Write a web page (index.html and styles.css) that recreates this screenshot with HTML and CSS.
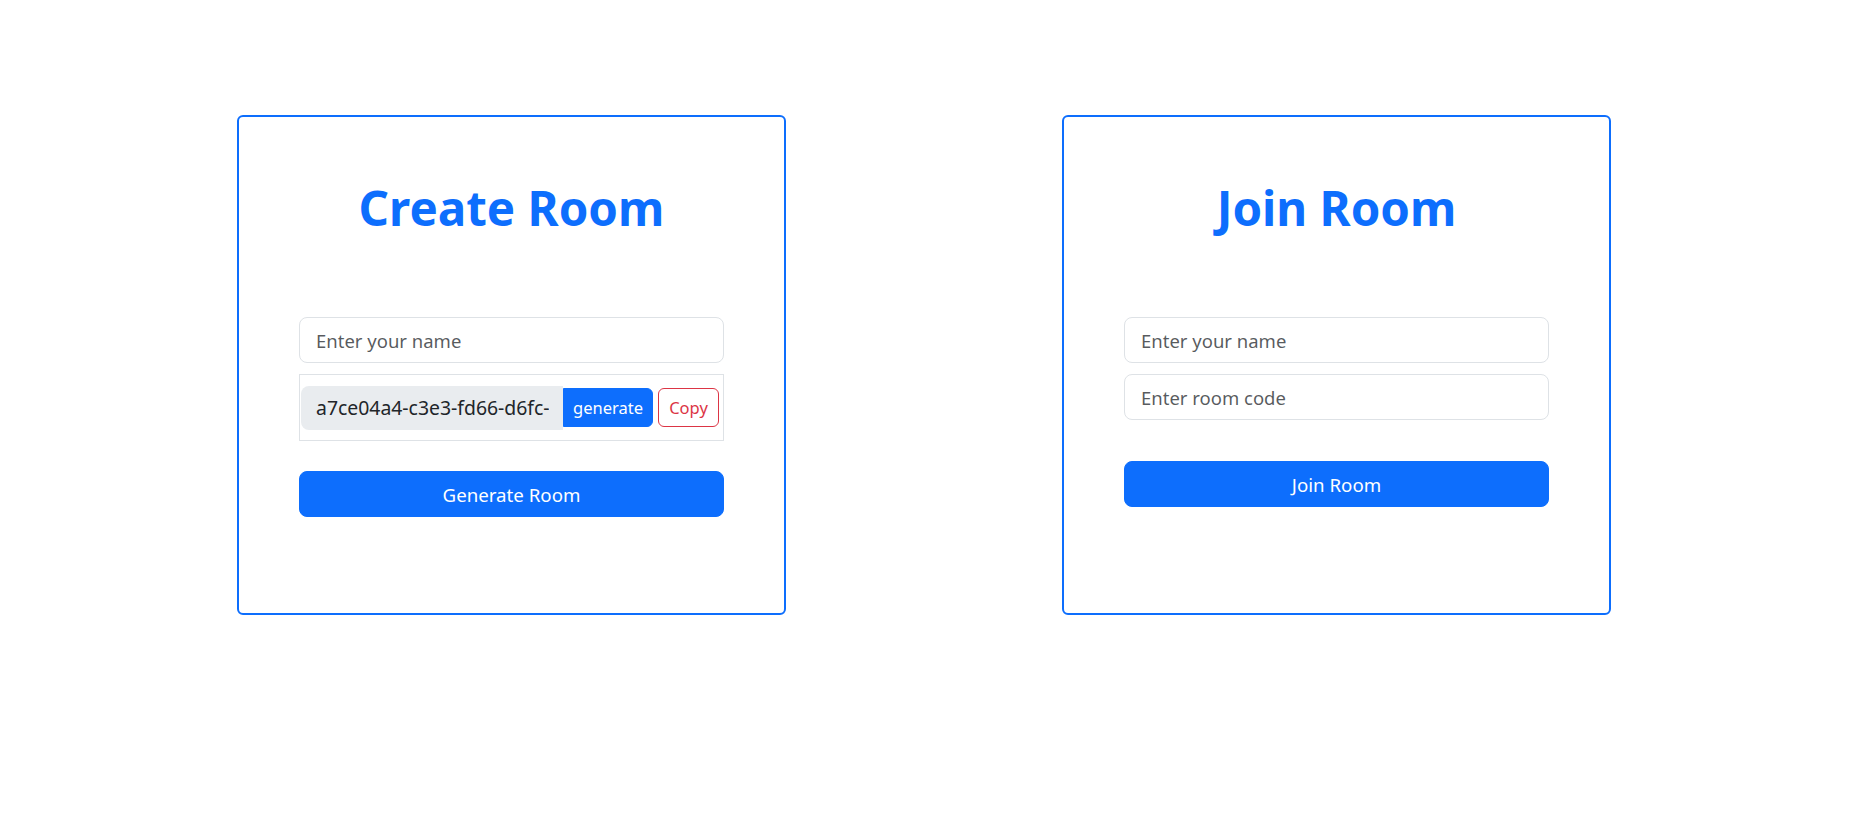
FILE: index.html
```html
<!DOCTYPE html>
<html lang="en">
<head>
<meta charset="utf-8">
<title>Rooms</title>
<link rel="stylesheet" href="styles.css">
</head>
<body>
<main class="page">
  <section class="card">
    <h1 class="card-title">Create Room</h1>
    <input class="field" type="text" placeholder="Enter your name">
    <div class="code-group">
      <input class="code-field" type="text" value="a7ce04a4-c3e3-fd66-d6fc-0a1b2c3d4e5f" readonly>
      <button class="btn-generate" type="button">generate</button>
      <button class="btn-copy" type="button">Copy</button>
    </div>
    <button class="btn-main btn-main-create" type="button">Generate Room</button>
  </section>
  <section class="card">
    <h1 class="card-title">Join Room</h1>
    <input class="field" type="text" placeholder="Enter your name">
    <input class="field field-second" type="text" placeholder="Enter room code">
    <button class="btn-main btn-main-join" type="button">Join Room</button>
  </section>
</main>
</body>
</html>
```
FILE: styles.css
```css
* { box-sizing: border-box; }

html, body {
  margin: 0;
  padding: 0;
  background: #ffffff;
}

body {
  font-family: "Noto Sans", "Open Sans", sans-serif;
  color: #212529;
}

.page {
  display: flex;
  align-items: stretch;
  gap: 276px;
  padding: 115px 0 0 237px;
}

.card {
  width: 549px;
  border: 2px solid #0d6efd;
  border-radius: 6px;
  padding: 62px 60px 96px;
  display: flex;
  flex-direction: column;
}

.card-title {
  margin: 0 0 80px;
  text-align: center;
  color: #0d6efd;
  font-size: 47.5px;
  font-weight: 700;
  line-height: 58px;
}

.field {
  display: block;
  width: 100%;
  height: 46px;
  padding: 0 16px;
  font-family: inherit;
  font-size: 18.5px;
  color: #212529;
  background: #fff;
  border: 1px solid #dee2e6;
  border-radius: 8px;
  outline: none;
}

.field::placeholder {
  color: rgba(33, 37, 41, 0.75);
}

.field-second {
  margin-top: 11px;
}

.code-group {
  margin-top: 11px;
  height: 67px;
  border: 1px solid #dee2e6;
  display: flex;
  align-items: center;
  padding: 0 4px 0 1px;
}

.code-field {
  width: 262px;
  height: 44px;
  flex: none;
  padding: 0 14px 0 15px;
  font-family: inherit;
  font-size: 19.4px;
  color: #212529;
  background: #e9ecef;
  border: none;
  border-radius: 8px 0 0 8px;
  outline: none;
}

.btn-generate {
  width: 90px;
  height: 39px;
  flex: none;
  font-family: inherit;
  font-size: 16.5px;
  color: #fff;
  background: #0d6efd;
  border: 1px solid #0d6efd;
  border-radius: 0 6px 6px 0;
  padding: 0;
}

.btn-copy {
  margin-left: 5px;
  width: 61px;
  height: 39px;
  flex: none;
  font-family: inherit;
  font-size: 16.5px;
  color: #dc3545;
  background: #fff;
  border: 1px solid #dc3545;
  border-radius: 6px;
  padding: 0;
}

.btn-main {
  display: block;
  width: 100%;
  height: 46px;
  font-family: inherit;
  font-size: 18.7px;
  color: #fff;
  background: #0d6efd;
  border: 1px solid #0d6efd;
  border-radius: 8px;
  padding: 0;
}

.btn-main-create { margin-top: 30px; }
.btn-main-join { margin-top: 41px; }
```
